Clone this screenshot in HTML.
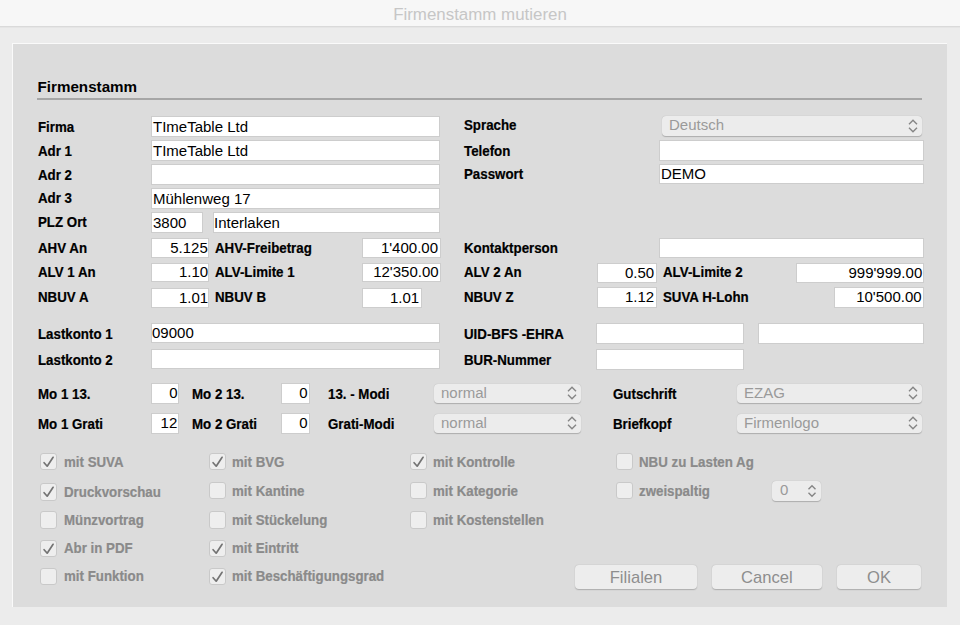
<!DOCTYPE html>
<html><head><meta charset="utf-8"><style>
*{margin:0;padding:0;box-sizing:border-box}
html,body{width:960px;height:625px;overflow:hidden;background:#ececec;font-family:"Liberation Sans",sans-serif}
#title{position:absolute;left:0;top:0;width:960px;height:27px;background:#f7f7f7;border-bottom:1px solid #dadada;box-shadow:0 1px 0 #e5e5e5}
#title div{position:absolute;left:0;width:960px;top:3.7px;line-height:22px;text-align:center;font-size:16.9px;color:#c6c6c6}
#panel{position:absolute;left:12px;top:43px;width:935px;height:564px;background:#dcdcdc;border-top:1px solid #fafafa;border-left:1px solid #fafafa}
#hdr{position:absolute;left:37.5px;top:77px;font-size:15.2px;font-weight:bold;line-height:20px;color:#000}
#hline{position:absolute;left:37px;top:98px;width:885px;height:2px;background:#a6a6a6}
.lbl,.cbl{position:absolute;font-size:13.8px;font-weight:bold;line-height:20px;white-space:nowrap;color:#000;-webkit-text-stroke:0.2px #000;transform:scaleX(0.964);transform-origin:0 0}
.cbl{color:#8a8a8a;-webkit-text-stroke:0.2px #8a8a8a}
.fld{position:absolute;background:#fff;border:1.5px solid #cdcdcd}
.fld span{position:absolute;top:50%;transform:translateY(-50%) scaleX(0.968);transform-origin:0 50%;font-size:15.5px;line-height:18px;white-space:nowrap;color:#000}
.fld span.r{transform-origin:100% 50%}
.pop{position:absolute;background:#ececec;border-radius:4px;box-shadow:0 0.5px 1px rgba(0,0,0,0.22)}
.pop span{position:absolute;left:7.2px;top:50%;margin-top:-0.7px;transform:translateY(-50%) scaleX(0.968);transform-origin:0 50%;font-size:15.5px;line-height:18px;color:#9a9a9a;white-space:nowrap}
.chev{position:absolute;right:3.6px;top:50%;transform:translateY(-50%)}
.cb{position:absolute;width:17px;height:17.4px;background:#eeeeee;border-radius:3px;border:1px solid #c9c9c9}
.cb svg{position:absolute;left:-1px;top:-1px}
.btn{position:absolute;background:#ededed;border-radius:4px;box-shadow:0 0.5px 1.2px rgba(0,0,0,0.22);text-align:center;font-size:16.6px;line-height:26px;color:#8e8e8e}
</style></head><body>
<div id="title"><div>Firmenstamm mutieren</div></div>
<div id="panel"></div>
<div id="hdr">Firmenstamm</div>
<div id="hline"></div>
<div class="lbl" style="left:37.5px;top:118.02px">Firma</div>
<div class="fld" style="left:151px;top:116px;width:289px;height:21px;"><span style="left:0.5px">TImeTable Ltd</span></div>
<div class="lbl" style="left:37.5px;top:142.02px">Adr 1</div>
<div class="fld" style="left:151px;top:140px;width:289px;height:21px;"><span style="left:0.5px">TImeTable Ltd</span></div>
<div class="lbl" style="left:37.5px;top:165.52px">Adr 2</div>
<div class="fld" style="left:151px;top:164px;width:289px;height:21px;"><span style="left:0.5px"></span></div>
<div class="lbl" style="left:37.5px;top:189.02px">Adr 3</div>
<div class="fld" style="left:151px;top:188px;width:289px;height:21px;"><span style="left:0.5px">Mühlenweg 17</span></div>
<div class="lbl" style="left:37.5px;top:213.02px">PLZ Ort</div>
<div class="fld" style="left:151px;top:212px;width:52px;height:21px;"><span style="left:0.5px">3800</span></div>
<div class="fld" style="left:212.5px;top:212px;width:227.5px;height:21px;"><span style="left:0.5px">Interlaken</span></div>
<div class="lbl" style="left:37.5px;top:238.52px">AHV An</div>
<div class="fld" style="left:151px;top:238px;width:58px;height:19.5px;"><span class="r" style="right:0px">5.125</span></div>
<div class="lbl" style="left:215px;top:238.52px">AHV-Freibetrag</div>
<div class="fld" style="left:362px;top:238px;width:78.5px;height:19.5px;"><span class="r" style="right:1.2px">1'400.00</span></div>
<div class="lbl" style="left:37.5px;top:262.52px">ALV 1 An</div>
<div class="fld" style="left:151px;top:262.5px;width:58px;height:19.80000000000001px;"><span class="r" style="right:0px">1.10</span></div>
<div class="lbl" style="left:215px;top:262.52px">ALV-Limite 1</div>
<div class="fld" style="left:362px;top:262.5px;width:78.5px;height:19.80000000000001px;"><span class="r" style="right:1.2px">12'350.00</span></div>
<div class="lbl" style="left:37.5px;top:287.52px">NBUV A</div>
<div class="fld" style="left:151px;top:287.5px;width:58px;height:20.19999999999999px;"><span class="r" style="right:0px">1.01</span></div>
<div class="lbl" style="left:215px;top:287.52px">NBUV B</div>
<div class="fld" style="left:362px;top:287.5px;width:59.80000000000001px;height:20.19999999999999px;"><span class="r" style="right:1.2px">1.01</span></div>
<div class="lbl" style="left:464.3px;top:115.52px">Sprache</div>
<div class="pop" style="left:662px;top:116px;width:259.5px;height:20px"><span>Deutsch</span><svg class="chev" width="10" height="14" viewBox="0 0 10 14"><path d="M1 5.2 L5 1.2 L9 5.2 M1 8.8 L5 12.8 L9 8.8" fill="none" stroke="#858585" stroke-width="1.4"/></svg></div>
<div class="lbl" style="left:464.3px;top:141.52px">Telefon</div>
<div class="fld" style="left:659.3px;top:140.3px;width:264.70000000000005px;height:20.69999999999999px;"><span style="left:0.5px"></span></div>
<div class="lbl" style="left:464.3px;top:165.02px">Passwort</div>
<div class="fld" style="left:659.3px;top:164px;width:264.70000000000005px;height:20.19999999999999px;"><span style="left:0.5px">DEMO</span></div>
<div class="lbl" style="left:464.3px;top:238.52px">Kontaktperson</div>
<div class="fld" style="left:659px;top:237.5px;width:265px;height:20.5px;"><span style="left:0.5px"></span></div>
<div class="lbl" style="left:464.3px;top:262.52px">ALV 2 An</div>
<div class="fld" style="left:597px;top:262.6px;width:59.5px;height:20.0px;"><span class="r" style="right:1.2px">0.50</span></div>
<div class="lbl" style="left:662.5px;top:262.52px">ALV-Limite 2</div>
<div class="fld" style="left:796.4px;top:262.6px;width:127.60000000000002px;height:20.399999999999977px;"><span class="r" style="right:1.2px">999'999.00</span></div>
<div class="lbl" style="left:464.3px;top:287.52px">NBUV Z</div>
<div class="fld" style="left:597px;top:287.4px;width:59.5px;height:20.200000000000045px;"><span class="r" style="right:1.2px">1.12</span></div>
<div class="lbl" style="left:662.5px;top:287.52px">SUVA H-Lohn</div>
<div class="fld" style="left:833.8px;top:287.4px;width:90.20000000000005px;height:20.200000000000045px;"><span class="r" style="right:1.2px">10'500.00</span></div>
<div class="lbl" style="left:37.5px;top:324.52px">Lastkonto 1</div>
<div class="fld" style="left:150.5px;top:323.4px;width:289.5px;height:20.0px;"><span style="left:0.5px">09000</span></div>
<div class="lbl" style="left:37.5px;top:350.62px">Lastkonto 2</div>
<div class="fld" style="left:150.5px;top:349.4px;width:289.5px;height:20.0px;"><span style="left:0.5px"></span></div>
<div class="lbl" style="left:464.3px;top:324.52px">UID-BFS -EHRA</div>
<div class="fld" style="left:596.3px;top:323.3px;width:147.70000000000005px;height:20.5px;"><span style="left:0.5px"></span></div>
<div class="fld" style="left:758px;top:323.3px;width:166px;height:20.5px;"><span style="left:0.5px"></span></div>
<div class="lbl" style="left:464.3px;top:350.62px">BUR-Nummer</div>
<div class="fld" style="left:596.3px;top:349px;width:147.70000000000005px;height:21px;"><span style="left:0.5px"></span></div>
<div class="lbl" style="left:37.5px;top:384.72px">Mo 1 13.</div>
<div class="fld" style="left:150.5px;top:383px;width:28.5px;height:20.5px;"><span class="r" style="right:0.8px">0</span></div>
<div class="lbl" style="left:192.2px;top:384.72px">Mo 2 13.</div>
<div class="fld" style="left:281px;top:383px;width:28.600000000000023px;height:20.5px;"><span class="r" style="right:0.8px">0</span></div>
<div class="lbl" style="left:327.6px;top:384.72px">13. - Modi</div>
<div class="pop" style="left:434px;top:383.6px;width:147px;height:19.299999999999955px"><span>normal</span><svg class="chev" width="10" height="14" viewBox="0 0 10 14"><path d="M1 5.2 L5 1.2 L9 5.2 M1 8.8 L5 12.8 L9 8.8" fill="none" stroke="#858585" stroke-width="1.4"/></svg></div>
<div class="lbl" style="left:613.4px;top:384.72px">Gutschrift</div>
<div class="pop" style="left:737px;top:383.6px;width:185px;height:19.299999999999955px"><span>EZAG</span><svg class="chev" width="10" height="14" viewBox="0 0 10 14"><path d="M1 5.2 L5 1.2 L9 5.2 M1 8.8 L5 12.8 L9 8.8" fill="none" stroke="#858585" stroke-width="1.4"/></svg></div>
<div class="lbl" style="left:37.5px;top:414.62px">Mo 1 Grati</div>
<div class="fld" style="left:150.5px;top:413.3px;width:28.5px;height:20.30000000000001px;"><span class="r" style="right:0.8px">12</span></div>
<div class="lbl" style="left:192.2px;top:414.62px">Mo 2 Grati</div>
<div class="fld" style="left:281px;top:413.3px;width:28.600000000000023px;height:20.30000000000001px;"><span class="r" style="right:0.8px">0</span></div>
<div class="lbl" style="left:327.6px;top:414.62px">Grati-Modi</div>
<div class="pop" style="left:434px;top:413.6px;width:147px;height:19.299999999999955px"><span>normal</span><svg class="chev" width="10" height="14" viewBox="0 0 10 14"><path d="M1 5.2 L5 1.2 L9 5.2 M1 8.8 L5 12.8 L9 8.8" fill="none" stroke="#858585" stroke-width="1.4"/></svg></div>
<div class="lbl" style="left:613.4px;top:414.62px">Briefkopf</div>
<div class="pop" style="left:737px;top:413.6px;width:185px;height:19.299999999999955px"><span>Firmenlogo</span><svg class="chev" width="10" height="14" viewBox="0 0 10 14"><path d="M1 5.2 L5 1.2 L9 5.2 M1 8.8 L5 12.8 L9 8.8" fill="none" stroke="#858585" stroke-width="1.4"/></svg></div>
<div class="cb" style="left:40.0px;top:453.0px"><svg width="17" height="17" viewBox="0 0 17 17"><path d="M4.1 9.7 L7.2 13.2 L13.1 4.3" fill="none" stroke="#737373" stroke-width="1.7" stroke-linecap="round" stroke-linejoin="round"/></svg></div>
<div class="cbl" style="left:63.6px;top:452.72px">mit SUVA</div>
<div class="cb" style="left:40.0px;top:483.2px"><svg width="17" height="17" viewBox="0 0 17 17"><path d="M4.1 9.7 L7.2 13.2 L13.1 4.3" fill="none" stroke="#737373" stroke-width="1.7" stroke-linecap="round" stroke-linejoin="round"/></svg></div>
<div class="cbl" style="left:63.6px;top:482.92px">Druckvorschau</div>
<div class="cb" style="left:40.0px;top:511.4px"></div>
<div class="cbl" style="left:63.6px;top:511.12px">Münzvortrag</div>
<div class="cb" style="left:40.0px;top:539.5px"><svg width="17" height="17" viewBox="0 0 17 17"><path d="M4.1 9.7 L7.2 13.2 L13.1 4.3" fill="none" stroke="#737373" stroke-width="1.7" stroke-linecap="round" stroke-linejoin="round"/></svg></div>
<div class="cbl" style="left:63.6px;top:539.22px">Abr in PDF</div>
<div class="cb" style="left:40.0px;top:567.7px"></div>
<div class="cbl" style="left:63.6px;top:567.42px">mit Funktion</div>
<div class="cb" style="left:208.8px;top:453.0px"><svg width="17" height="17" viewBox="0 0 17 17"><path d="M4.1 9.7 L7.2 13.2 L13.1 4.3" fill="none" stroke="#737373" stroke-width="1.7" stroke-linecap="round" stroke-linejoin="round"/></svg></div>
<div class="cbl" style="left:232.3px;top:452.72px">mit BVG</div>
<div class="cb" style="left:208.8px;top:481.9px"></div>
<div class="cbl" style="left:232.3px;top:481.62px">mit Kantine</div>
<div class="cb" style="left:208.8px;top:511.4px"></div>
<div class="cbl" style="left:232.3px;top:511.12px">mit Stückelung</div>
<div class="cb" style="left:208.8px;top:539.5px"><svg width="17" height="17" viewBox="0 0 17 17"><path d="M4.1 9.7 L7.2 13.2 L13.1 4.3" fill="none" stroke="#737373" stroke-width="1.7" stroke-linecap="round" stroke-linejoin="round"/></svg></div>
<div class="cbl" style="left:232.3px;top:539.22px">mit Eintritt</div>
<div class="cb" style="left:208.8px;top:567.7px"><svg width="17" height="17" viewBox="0 0 17 17"><path d="M4.1 9.7 L7.2 13.2 L13.1 4.3" fill="none" stroke="#737373" stroke-width="1.7" stroke-linecap="round" stroke-linejoin="round"/></svg></div>
<div class="cbl" style="left:232.3px;top:567.42px">mit Beschäftigungsgrad</div>
<div class="cb" style="left:409.6px;top:453.0px"><svg width="17" height="17" viewBox="0 0 17 17"><path d="M4.1 9.7 L7.2 13.2 L13.1 4.3" fill="none" stroke="#737373" stroke-width="1.7" stroke-linecap="round" stroke-linejoin="round"/></svg></div>
<div class="cbl" style="left:432.6px;top:452.72px">mit Kontrolle</div>
<div class="cb" style="left:409.6px;top:481.9px"></div>
<div class="cbl" style="left:432.6px;top:481.62px">mit Kategorie</div>
<div class="cb" style="left:409.6px;top:511.4px"></div>
<div class="cbl" style="left:432.6px;top:511.12px">mit Kostenstellen</div>
<div class="cb" style="left:616.0px;top:453.0px"></div>
<div class="cbl" style="left:639px;top:452.72px">NBU zu Lasten Ag</div>
<div class="cb" style="left:616.0px;top:481.9px"></div>
<div class="cbl" style="left:639px;top:481.62px">zweispaltig</div>
<div class="pop" style="left:771.5px;top:481px;width:49px;height:19.7px"><span style="left:8px">0</span><svg class="chev" style="right:4px" width="10" height="14" viewBox="0 0 10 14"><path d="M1.5 5.2 L5 1.7 L8.5 5.2 M1.5 8.8 L5 12.3 L8.5 8.8" fill="none" stroke="#858585" stroke-width="1.4"/></svg></div>
<div class="btn" style="left:575px;top:565px;width:122px;height:24.299999999999955px">Filialen</div>
<div class="btn" style="left:712px;top:565px;width:109.79999999999995px;height:23.799999999999955px">Cancel</div>
<div class="btn" style="left:836.8px;top:565px;width:84.5px;height:23.799999999999955px">OK</div>
</body></html>
